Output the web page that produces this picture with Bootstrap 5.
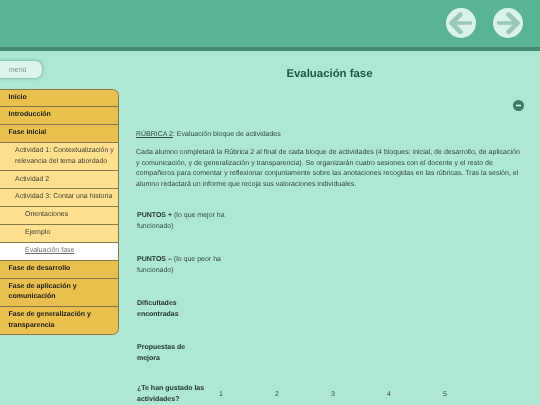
<!DOCTYPE html>
<html lang="es">
<head>
<meta charset="utf-8">
<title>Evaluación fase</title>
<link href="https://cdn.jsdelivr.net/npm/bootstrap@5.3.0/dist/css/bootstrap.min.css" rel="stylesheet">
<style>
html,body{height:405px;overflow:hidden}
body{background:#aee8d4;font-family:"Liberation Sans",Arial,sans-serif;font-size:7px;line-height:10.8px;color:#344742;text-rendering:geometricPrecision}
.top-band{height:51px;background:#5ab393;border-bottom:4px solid #478a74;gap:16.7px;padding:8.3px 17.3px 0 0}
.nav-disc{width:30px;height:30px;display:block}
.page-body{gap:17px}
.side-col,.main-col{will-change:transform}
.side-col{width:119px;flex:none}
.menu-pill{display:block;width:47.5px;height:17px;margin:10px 0 10.5px -6px;padding:0 0 0 15px;border:0;border-radius:7px;background:#ddf4ec;box-shadow:0 0 3px 1px #7fbfa8;color:#82928d;font-size:7px;line-height:17px;text-align:left}
.side-menu{background:#e9c04d;border:1px solid #85794a;border-left:0;border-radius:0 7px 7px 0;overflow:hidden;width:119px}
.side-menu a{display:block;color:#1c1c1c;text-decoration:none;font-size:7px;line-height:10.6px;border-bottom:1px solid #85794a}
.side-menu a:last-child{border-bottom:0}
.lvl-a{font-weight:700;padding:3.125px 8.5px;background:#e9c04d}
.lvl-b{padding:3.125px 4px 3.125px 15px;background:#ffe08e;color:#404034!important}
.lvl-c{padding:3.125px 4px 3.125px 25px;background:#ffe08e;color:#404034!important}
.lvl-now{background:#fff;color:#6f6f6f!important;text-decoration:underline!important}
.main-col{width:386px;flex:none}
.page-title{font-size:11.4px;line-height:14px;font-weight:700;color:#1f5748;text-align:center;margin:16px 0 19px;padding-left:1px}
.fold-row{height:12px;margin-right:-2px}
.fold-mark{width:11px;height:11px;display:block}
.lead-line{margin:18px 0 7px}
.body-copy{margin:0;font-size:7.05px}
.rubric{margin-top:9px;width:330px;table-layout:fixed;--bs-table-bg:transparent;--bs-table-color:#344742;color:#344742;font-size:7px}
.rubric td{padding:0 1px;border:0;vertical-align:middle;background:transparent;font-weight:400}
.rubric tr{height:44px}
.rubric tr:last-child{height:38px}
.head-col{width:82px}
.num-col{width:56px}
.rubric .wide-head{padding-right:40px}
.rubric .narrow-head{padding-right:9px}
.rubric b{color:#25332f}
</style>
</head>
<body>
<header class="top-band d-flex justify-content-end align-items-start">
<svg class="nav-disc" viewBox="0 0 30 30" role="img" aria-label="Anterior"><circle cx="15" cy="15" r="15" fill="#daf3ea"/><path d="M24.5 15H7" stroke="#9ac8b5" stroke-width="3.6" stroke-linecap="round"/><path d="M14.5 6.5 5.5 15.2l9 8.8" fill="none" stroke="#9ac8b5" stroke-width="4.6" stroke-linecap="round" stroke-linejoin="round"/></svg>
<svg class="nav-disc" viewBox="0 0 30 30" role="img" aria-label="Siguiente"><circle cx="15" cy="15" r="15" fill="#daf3ea"/><path d="M5.5 15H23" stroke="#9ac8b5" stroke-width="3.6" stroke-linecap="round"/><path d="M15.5 6.5l9 8.7-9 8.8" fill="none" stroke="#9ac8b5" stroke-width="4.6" stroke-linecap="round" stroke-linejoin="round"/></svg>
</header>
<div class="page-body d-flex align-items-start">
<aside class="side-col">
<button type="button" class="menu-pill">menú</button>
<nav class="side-menu">
<a class="lvl-a" href="#">Inicio</a>
<a class="lvl-a" href="#">Introducción</a>
<a class="lvl-a" href="#">Fase inicial</a>
<a class="lvl-b" href="#">Actividad 1: Contextualización y relevancia del tema abordado</a>
<a class="lvl-b" href="#">Actividad 2</a>
<a class="lvl-b" href="#">Actividad 3: Contar una historia</a>
<a class="lvl-c" href="#">Orientaciones</a>
<a class="lvl-c" href="#">Ejemplo</a>
<a class="lvl-c lvl-now" href="#">Evaluación fase</a>
<a class="lvl-a" href="#">Fase de desarrollo</a>
<a class="lvl-a" href="#">Fase de aplicación y comunicación</a>
<a class="lvl-a" href="#">Fase de generalización y transparencia</a>
</nav>
</aside>
<main class="main-col">
<h1 class="page-title">Evaluación fase</h1>
<div class="fold-row d-flex justify-content-end">
<svg class="fold-mark" viewBox="0 0 11 11" role="img" aria-label="Contraer"><circle cx="5.5" cy="5.5" r="5.5" fill="#3f7a68"/><rect x="3" y="4.7" width="5" height="1.6" fill="#daf3ea"/></svg>
</div>
<p class="lead-line"><u>RÚBRICA 2</u>: Evaluación bloque de actividades</p>
<p class="body-copy">Cada alumno completará la Rúbrica 2 al final de cada bloque de actividades (4 bloques: inicial, de desarrollo, de aplicación y comunicación, y de generalización y transparencia). Se organizarán cuatro sesiones con el docente y el resto de compañeros para comentar y reflexionar conjuntamente sobre las anotaciones recogidas en las rúbricas. Tras la sesión, el alumno redactará un informe que recoja sus valoraciones individuales.</p>
<table class="table rubric mb-0">
<colgroup><col class="head-col"><col class="num-col"><col class="num-col"><col class="num-col"><col class="num-col"><col class="num-col"></colgroup>
<tbody>
<tr><td colspan="2" class="wide-head"><b>PUNTOS +</b> (lo que mejor ha funcionado)</td><td></td><td></td><td></td><td></td></tr>
<tr><td colspan="2" class="wide-head"><b>PUNTOS –</b> (lo que peor ha funcionado)</td><td></td><td></td><td></td><td></td></tr>
<tr><td class="narrow-head"><b>Dificultades encontradas</b></td><td></td><td></td><td></td><td></td><td></td></tr>
<tr><td class="narrow-head"><b>Propuestas de mejora</b></td><td></td><td></td><td></td><td></td><td></td></tr>
<tr><td class="narrow-head"><b>¿Te han gustado las actividades?</b></td><td>1</td><td>2</td><td>3</td><td>4</td><td>5</td></tr>
</tbody>
</table>
</main>
</div>
<script src="https://cdn.jsdelivr.net/npm/bootstrap@5.3.0/dist/js/bootstrap.bundle.min.js"></script>
</body>
</html>
